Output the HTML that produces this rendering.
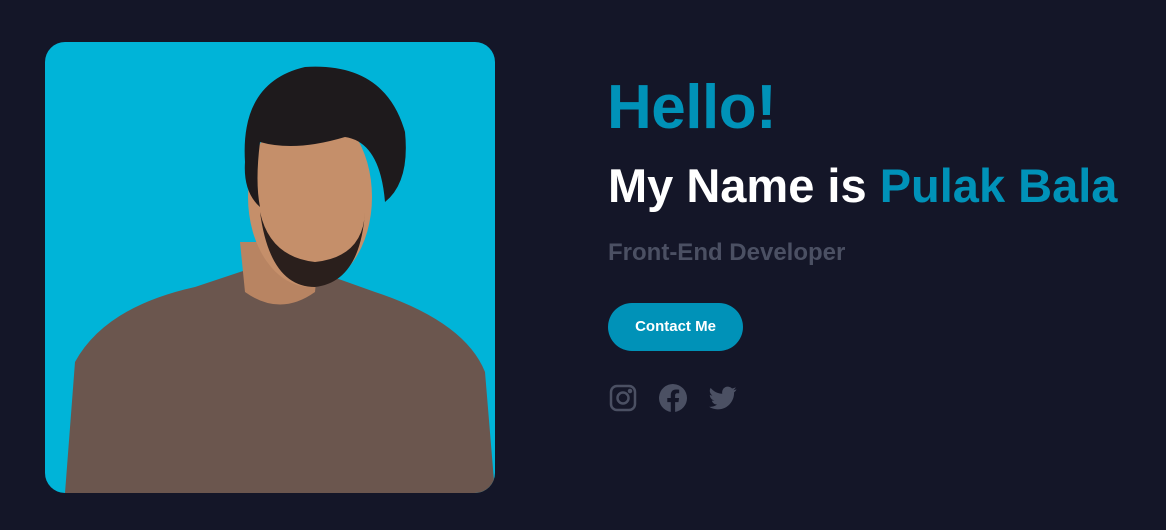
<!DOCTYPE html>
<html><head><meta charset="utf-8"><style>
*{margin:0;padding:0;box-sizing:border-box}
body{width:1166px;height:530px;background:#141628;font-family:"Liberation Sans",sans-serif;position:relative;overflow:hidden}
.img{position:absolute;left:45px;top:42px;width:450px;height:451px;border-radius:20px;background:#00b4d8;overflow:hidden}
h1{position:absolute;left:607px;top:72px;font-size:62px;color:#0092b8;font-weight:bold;letter-spacing:-0.5px}
h2{position:absolute;left:608px;top:158px;font-size:47px;color:#fff;font-weight:bold;white-space:nowrap}
h2 span{color:#0092b8}
.sub{position:absolute;left:608px;top:239px;font-size:24px;color:#4b5063;font-weight:bold}
.btn{position:absolute;left:608px;top:303px;width:135px;height:48px;border-radius:24px;background:#0092b8;color:#fff;font-weight:bold;font-size:15px;line-height:48px;text-align:center}
.ic{position:absolute;top:384px}
</style></head><body>
<div class="img"><svg width="450" height="451" viewBox="0 0 450 451">
<path d="M20 451 L30 320 Q60 265 150 245 L210 225 L260 225 L330 250 Q420 280 440 330 L450 451Z" fill="#6b564e"/>
<path d="M195 200 L200 250 Q235 275 270 250 L275 200Z" fill="#b88462"/>
<ellipse cx="265" cy="155" rx="62" ry="90" fill="#c58f6a"/>
<path d="M215 170 Q225 245 270 245 Q315 240 320 170 Q318 215 270 220 Q225 215 215 170Z" fill="#2a1f1c"/>
<path d="M200 120 Q195 40 260 25 Q340 20 360 90 Q365 140 340 160 Q335 100 300 95 Q250 110 215 100 Q210 140 215 165 Q198 150 200 120Z" fill="#1e1a1c"/>
</svg></div>
<h1>Hello!</h1>
<h2>My Name is <span>Pulak Bala</span></h2>
<div class="sub">Front-End Developer</div>
<div class="btn">Contact Me</div>
<svg class="ic" style="left:609px" width="28" height="28" viewBox="0 0 28 28" fill="none" stroke="#4b5063" stroke-width="2.5"><rect x="2" y="2" width="24" height="24" rx="6"/><circle cx="14" cy="14" r="5.5"/><circle cx="21" cy="7" r="1" fill="#4b5063"/></svg>
<svg class="ic" style="left:659px" width="28" height="28" viewBox="0 0 24 24"><path fill="#4b5063" d="M24 12a12 12 0 1 0-13.9 11.9v-8.4H7.1V12h3V9.4c0-3 1.8-4.7 4.5-4.7 1.3 0 2.7.2 2.7.2v3h-1.5c-1.5 0-2 .9-2 1.9V12h3.4l-.5 3.5h-2.9v8.4A12 12 0 0 0 24 12z"/></svg>
<svg class="ic" style="left:709px" width="28" height="28" viewBox="0 0 24 24"><path fill="#4b5063" d="M23.6 4.6c-.9.4-1.8.6-2.8.8 1-.6 1.8-1.6 2.1-2.7-.9.6-2 1-3.1 1.2a4.9 4.9 0 0 0-8.4 4.5C7.4 8.2 3.8 6.3 1.4 3.300a4.9 4.9 0 0 0 1.5 6.6c-.8 0-1.6-.3-2.2-.6 0 2.4 1.7 4.4 3.9 4.8-.7.2-1.5.2-2.2.1.6 2 2.4 3.4 4.6 3.4A9.9 9.9 0 0 1 0 19.5 14 14 0 0 0 7.5 21.7c9.1 0 14-7.5 14-14v-.6c1-.7 1.8-1.6 2.1-2.5z"/></svg>
</body></html>
